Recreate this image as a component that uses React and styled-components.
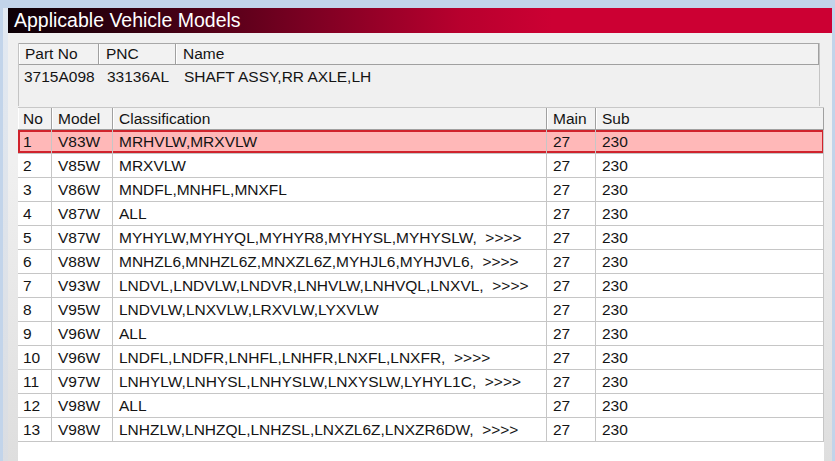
import styled, { createGlobalStyle } from "styled-components";

const GlobalStyle = createGlobalStyle`
  html, body {
    margin: 0;
    padding: 0;
    background: #c2d4ea;
  }
  body {
    font-family: "Liberation Sans", Arial, sans-serif;
  }
`;

const Frame = styled.div`
  width: 835px;
  height: 461px;
  box-sizing: border-box;
  padding: 8px 3px 0 3px;
  overflow: hidden;
`;

const Window = styled.div`
  height: 100%;
  box-sizing: border-box;
  padding-left: 5px;
  background: linear-gradient(180deg, #e2e9f2 0%, #dadde2 100%);
  display: flex;
  flex-direction: column;
`;

const TitleBar = styled.div`
  height: 25px;
  flex-shrink: 0;
  display: flex;
  align-items: center;
  padding-left: 6px;
  color: #ffffff;
  font-size: 19.5px;
  background: linear-gradient(
    90deg,
    #0c0006 0%,
    #3c0012 18%,
    #7a0022 36%,
    #b8002e 55%,
    #cc0033 66%,
    #cc0033 100%
  );
`;

const Body = styled.div`
  flex: 1;
  display: flex;
  flex-direction: column;
  padding: 10px 10px 0 10px;
  background: linear-gradient(180deg, #f0f0f0 0%, #f0f0f0 30%, #dedede 100%);
  font-size: 15.5px;
  color: #141414;
`;

/* part summary grid */
const PartBox = styled.div`
  height: 63px;
  width: 802px;
  box-sizing: border-box;
  border: 1px solid #c4c4c4;
  border-bottom: none;
  background: #f0f0f0;
`;

const PartCols = "80px 77px 1fr";

const PartHead = styled.div`
  display: grid;
  grid-template-columns: ${PartCols};
  height: 21px;
  border-top: 1px solid #a8a8a8;
  margin-top: -1px;
`;

const HeadCell = styled.div`
  display: flex;
  align-items: center;
  padding-left: ${(p) => p.$pad || 6}px;
  border-right: 1px solid #a0a0a0;
  border-bottom: 1px solid #a0a0a0;
  box-shadow: inset 1px 0 0 #ffffff;
  background: #f2f2f2;
  white-space: nowrap;
`;

const PartRow = styled.div`
  display: grid;
  grid-template-columns: ${PartCols};
  height: 24px;
`;

const Cell = styled.div`
  display: flex;
  align-items: center;
  padding-left: ${(p) => p.$pad || 6}px;
  white-space: pre;
  overflow: hidden;
`;

/* model list */
const ListCols = "34px 61px 434px 49px 1fr";

const List = styled.div`
  flex: 1;
  margin-top: 1px;
  margin-right: -2px;
  background: #ffffff;
  border-top: 1px solid #c8c8c8;
`;

const ListHead = styled.div`
  display: grid;
  grid-template-columns: ${ListCols};
  height: 22px;
`;

const ListRow = styled.div`
  display: grid;
  grid-template-columns: ${ListCols};
  height: 24px;
  box-sizing: border-box;
  border-bottom: 1px solid #c6c6c6;
  background: ${(p) => (p.$selected ? "#ffb8b8" : "#ffffff")};
  box-shadow: ${(p) => (p.$selected ? "0 0 0 2px #d0232c inset" : "none")};
`;

const ListCell = styled(Cell)`
  border-right: 1px solid #c6c6c6;
`;

const rows = [
  ["1", "V83W", "MRHVLW,MRXVLW"],
  ["2", "V85W", "MRXVLW"],
  ["3", "V86W", "MNDFL,MNHFL,MNXFL"],
  ["4", "V87W", "ALL"],
  ["5", "V87W", "MYHYLW,MYHYQL,MYHYR8,MYHYSL,MYHYSLW,  >>>>"],
  ["6", "V88W", "MNHZL6,MNHZL6Z,MNXZL6Z,MYHJL6,MYHJVL6,  >>>>"],
  ["7", "V93W", "LNDVL,LNDVLW,LNDVR,LNHVLW,LNHVQL,LNXVL,  >>>>"],
  ["8", "V95W", "LNDVLW,LNXVLW,LRXVLW,LYXVLW"],
  ["9", "V96W", "ALL"],
  ["10", "V96W", "LNDFL,LNDFR,LNHFL,LNHFR,LNXFL,LNXFR,  >>>>"],
  ["11", "V97W", "LNHYLW,LNHYSL,LNHYSLW,LNXYSLW,LYHYL1C,  >>>>"],
  ["12", "V98W", "ALL"],
  ["13", "V98W", "LNHZLW,LNHZQL,LNHZSL,LNXZL6Z,LNXZR6DW,  >>>>"],
];

export default function App() {
  return (
    <>
      <GlobalStyle />
      <Frame>
        <Window>
          <TitleBar>Applicable Vehicle Models</TitleBar>
          <Body>
            <PartBox>
              <PartHead>
                <HeadCell $pad={6}>Part No</HeadCell>
                <HeadCell $pad={7}>PNC</HeadCell>
                <HeadCell $pad={7}>Name</HeadCell>
              </PartHead>
              <PartRow>
                <Cell $pad={5}>3715A098</Cell>
                <Cell $pad={8}>33136AL</Cell>
                <Cell $pad={8}>SHAFT ASSY,RR AXLE,LH</Cell>
              </PartRow>
            </PartBox>
            <List>
              <ListHead>
                <HeadCell $pad={5}>No</HeadCell>
                <HeadCell>Model</HeadCell>
                <HeadCell>Classification</HeadCell>
                <HeadCell>Main</HeadCell>
                <HeadCell>Sub</HeadCell>
              </ListHead>
              {rows.map(([no, model, cls], i) => (
                <ListRow key={no} $selected={i === 0}>
                  <ListCell $pad={5}>{no}</ListCell>
                  <ListCell>{model}</ListCell>
                  <ListCell>{cls}</ListCell>
                  <ListCell>27</ListCell>
                  <ListCell>230</ListCell>
                </ListRow>
              ))}
            </List>
          </Body>
        </Window>
      </Frame>
    </>
  );
}
